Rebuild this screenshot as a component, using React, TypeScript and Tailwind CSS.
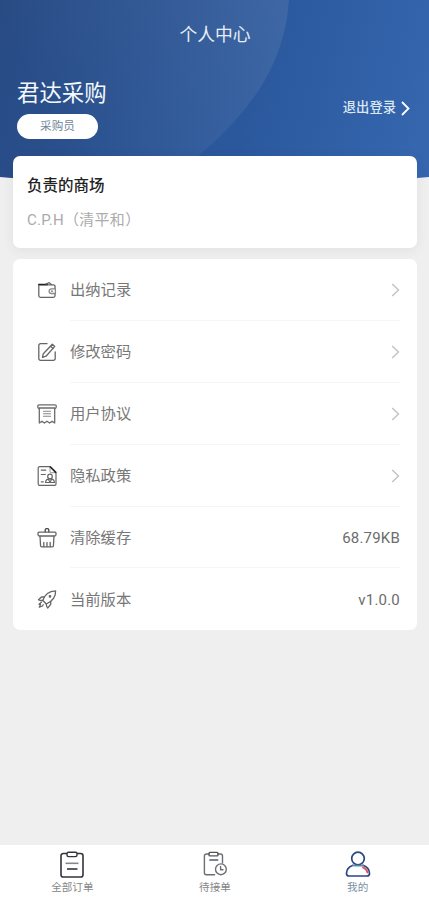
import type { ReactNode } from "react";

type MenuItem = {
  label: string;
  icon: ReactNode;
  value?: string;
};

type TabItem = {
  label: string;
  icon: ReactNode;
  active?: boolean;
};

const iconProps = {
  width: 22,
  height: 22,
  viewBox: "0 0 22 22",
  fill: "none",
  stroke: "#666",
  strokeWidth: 1.3,
  strokeLinecap: "round",
  strokeLinejoin: "round",
} as const;

const WalletIcon = () => (
  <svg {...iconProps}>
    <path d="M2.800 5.500V16.800a1.500 1.500 0 0 0 1.500 1.500h13.200a1.500 1.500 0 0 0 1.500-1.500v-2M19 9.500V7.300a1.500 1.500 0 0 0-1.500-1.500H4" />
    <path d="M3 5.500h8" stroke="#222" strokeWidth="1.700" />
    <path d="M9.800 5l3.400-1.300 2.200 1.800" />
    <path d="M19.400 9.900h-4a2.300 2.300 0 0 0 0 4.600h4z" stroke="#888" />
    <path d="M15.500 12.200h.8" />
  </svg>
);

const EditIcon = () => (
  <svg {...iconProps}>
    <path d="M11 2.700H4.500A1.700 1.700 0 0 0 2.800 4.400v13.200a1.700 1.700 0 0 0 1.700 1.700h13a1.700 1.700 0 0 0 1.700-1.700V11" />
    <path d="M16.300 3.200l2.500 2.200-8.800 9.800-3.600 1.100.9-3.600z" />
    <path d="M14.500 5.300l2.500 2.200" />
  </svg>
);

const AgreementIcon = () => (
  <svg {...iconProps} stroke="#6c6c6c">
    <path d="M3.300 5.500A1.500 1.500 0 0 1 1.800 4V3a1.200 1.200 0 0 1 1.200-1.200h16A1.200 1.200 0 0 1 20.200 3v1a1.500 1.500 0 0 1-1.500 1.500" />
    <path d="M3.300 5V20l2.600-1.800 2.500 1.800 2.600-1.800 2.600 1.800 2.500-1.800 2.600 1.800V5zM3.300 5h15.400" />
    <path d="M7.500 8.200h7M7.500 10.700h7M7.500 13.200h7" strokeWidth="1.100" stroke="#888" />
  </svg>
);

const PrivacyIcon = () => (
  <svg {...iconProps} strokeWidth={1.2}>
    <path d="M20 8.500V19a1.300 1.300 0 0 1-1.300 1.300H3.500A1.300 1.300 0 0 1 2.200 19V3a1.300 1.300 0 0 1 1.300-1.300H14" />
    <path d="M14 1.700v4.800a1.200 1.200 0 0 0 1.200 1.200h4.600" strokeWidth=".7" />
    <path d="M14.500 2l5.300 5.300" stroke="#222" strokeWidth="1.700" />
    <path d="M5.300 5.200h4.500M5.300 9.500h4M5.300 16.800h2" />
    <circle cx="14" cy="11.500" r="2.300" />
    <path d="M9.500 17.500c.1-2.300 1.500-3.700 4.500-3.700s4.400 1.400 4.500 3.700zM12.300 14.200l1.700 3 1.700-3" />
  </svg>
);

const CleanIcon = () => (
  <svg {...iconProps}>
    <path d="M9.200 5V3a1.300 1.300 0 0 1 1.300-1.300h1a1.300 1.300 0 0 1 1.300 1.300v2" stroke="#444" />
    <path d="M3 5.200h16a1 1 0 0 1 1 1v1.300a1.500 1.500 0 0 1-1.500 1.500h-15A1.500 1.500 0 0 1 2 7.500V6.200a1 1 0 0 1 1-1z" />
    <path d="M4 9.200l.6 9.800a1 1 0 0 0 1 .9h10.800a1 1 0 0 0 1-.9l.6-9.800" />
    <path d="M7.800 19.500v-4M11 19.500v-4M14.200 19.500v-4" />
  </svg>
);

const RocketIcon = () => (
  <svg {...iconProps}>
    <path d="M6.800 12.500C8.500 7 12.700 3 19.600 2.800 19.900 9.500 15.500 13.700 10.300 16z" />
    <path d="M8.200 9H5.500L2.500 11.800l2 .7h2.300M14.700 13.700v2.700L11.700 20l-1-1.500-.4-2.500" />
    <path d="M5.300 14.200L3 16.200l1.500.3-1.200 2.700 3.200-1.200.7-1.300" />
    <circle cx="14" cy="8.400" r=".7" fill="#666" />
  </svg>
);

const ChevronRight = () => (
  <svg width="9" height="14" viewBox="0 0 9 14" fill="none" stroke="#c0c0c0" strokeWidth="1.300">
    <path d="M1.200 1l6.300 6-6.300 6" />
  </svg>
);

const OrdersIcon = () => (
  <svg width="26" height="28" viewBox="0 0 26 28" fill="none" stroke="#33353b" strokeWidth="1.600" strokeLinejoin="round">
    <path d="M8 2.500H4.300A2.300 2.300 0 0 0 2 4.800v18.900A2.300 2.300 0 0 0 4.300 26h17.400a2.300 2.300 0 0 0 2.300-2.300V4.800a2.300 2.300 0 0 0-2.300-2.300H18" />
    <rect x="8" y="1.300" width="10" height="4.300" rx="1.500" strokeWidth="1.400" />
    <path d="M6.500 12.300h13" stroke="#888" />
    <path d="M8 18h10.500" />
  </svg>
);

const PendingIcon = () => (
  <svg width="26" height="28" viewBox="0 0 26 28" fill="none" stroke="#6d6e73" strokeWidth="1.400" strokeLinejoin="round" strokeLinecap="round">
    <path d="M7 3H4.400A2 2 0 0 0 2.400 5v16.700a2 2 0 0 0 2 2h8.200M20.500 12V5a2 2 0 0 0-2-2H16" />
    <rect x="7" y="1.400" width="9" height="3.500" rx="1" stroke="#555" />
    <path d="M7.800 9h8" stroke="#4d5c80" />
    <circle cx="18.900" cy="18.300" r="5.400" />
    <path d="M18.600 15.500v3.200h2.400" />
  </svg>
);

const MineIcon = () => (
  <svg width="26" height="28" viewBox="0 0 26 28" fill="none" stroke="#2b4680" strokeWidth="1.700" strokeLinejoin="round" strokeLinecap="round">
    <circle cx="13" cy="7.500" r="6.300" />
    <path d="M8 14.300C4 15.700 1.500 18.700 1.500 22.500a2.500 2.500 0 0 0 2.500 2.500h18a2.500 2.500 0 0 0 2.500-2.500c0-3.800-2.500-6.800-6.500-8.200" />
    <path d="M8 14.300c3 .4 7 .4 10 0" stroke="#5a8aa3" />
    <path d="M18 16.300c2.500 1 4 2.700 4.500 5.200" stroke="#d8576b" strokeWidth="1.900" />
  </svg>
);

const menu: MenuItem[] = [
  { label: "出纳记录", icon: <WalletIcon /> },
  { label: "修改密码", icon: <EditIcon /> },
  { label: "用户协议", icon: <AgreementIcon /> },
  { label: "隐私政策", icon: <PrivacyIcon /> },
  { label: "清除缓存", icon: <CleanIcon />, value: "68.79KB" },
  { label: "当前版本", icon: <RocketIcon />, value: "v1.0.0" },
];

const tabs: TabItem[] = [
  { label: "全部订单", icon: <OrdersIcon /> },
  { label: "待接单", icon: <PendingIcon /> },
  { label: "我的", icon: <MineIcon />, active: true },
];

// Blue backdrop with the large translucent disc and the curved lower edge
const HeaderBackground = () => (
  <svg className="absolute inset-x-0 top-0 h-[186px] w-full" viewBox="0 0 429 186" preserveAspectRatio="none">
    <defs>
      <linearGradient id="sky" x1="0" y1="0" x2="429" y2="100" gradientUnits="userSpaceOnUse">
        <stop offset="0" stopColor="#284b84" />
        <stop offset=".6" stopColor="#2b589d" />
        <stop offset="1" stopColor="#3566ae" />
      </linearGradient>
      <linearGradient id="disc" x1="40" y1="110" x2="280" y2="10" gradientUnits="userSpaceOnUse">
        <stop offset="0" stopColor="#b4bec8" stopOpacity="0" />
        <stop offset="1" stopColor="#b4bec8" stopOpacity=".13" />
      </linearGradient>
      <clipPath id="curve">
        <path d="M0 0h429v177Q214 197 0 177z" />
      </clipPath>
    </defs>
    <g clipPath="url(#curve)">
      <path d="M0 0h429v186H0z" fill="url(#sky)" />
      <path d="M0 0H289Q287 32 274 62Q254 108 203 152L160 186H0z" fill="url(#disc)" />
    </g>
  </svg>
);

export default function App() {
  return (
    <div className="flex h-[900px] w-full flex-col bg-[#efefef] font-['Roboto','Noto_Sans_CJK_SC',sans-serif]">
      <div className="relative flex-1">
        <HeaderBackground />

        <div className="relative pr-[12px] pl-[13px]">
          <h1 className="pt-[22px] text-center text-[17.800px] leading-[26px] text-[#e8eef6]">个人中心</h1>

          <div className="mt-[29px] flex h-[79px] justify-between pl-1">
            <div>
              <h2 className="text-[22.400px] leading-[32px] text-[#f4f8fc]">君达采购</h2>
              <div className="mt-[5px] flex h-[25px] w-[81px] items-center justify-center rounded-full bg-white pt-px text-[11.600px] text-[#71869b]">
                采购员
              </div>
            </div>
            <button className="mt-[20px] flex h-[22px] items-center gap-[5px] pr-[7px] text-[13.300px] font-medium text-[#dce7f4]">
              退出登录
              <svg width="9" height="15" viewBox="0 0 9 15" fill="none" stroke="#fff" strokeWidth="1.800">
                <path d="M1 1l6.500 6.500L1 14" />
              </svg>
            </button>
          </div>

          <section className="h-[92px] rounded-[7px] bg-white px-[14px] pt-[18px] shadow-[0_2px_12px_rgba(60,70,90,0.08)]">
            <h3 className="text-[15.500px] leading-[24px] font-medium text-[#222]">负责的商场</h3>
            <p className="mt-[10px] text-[15px] leading-[24px] tracking-[0.300px] text-[#ababab]">C.P.H（清平和）</p>
          </section>

          <section className="mt-[11px] rounded-[7px] bg-white pr-[17px] pl-[23px]">
            {menu.map((item, i) => (
              <div key={item.label} className="flex h-[61.900px] items-center gap-[12px]">
                {item.icon}
                <div
                  className={
                    i < menu.length - 1
                      ? "flex h-full flex-1 items-center justify-between border-b border-[#f5f5f5] pt-[2px]"
                      : "flex h-full flex-1 items-center justify-between pt-[2px]"
                  }
                >
                  <span className="pt-px text-[15.300px] text-[#777]">{item.label}</span>
                  {item.value ? (
                    <span className="text-[15px] tracking-[0.200px] text-[#6c6c6c]">{item.value}</span>
                  ) : (
                    <ChevronRight />
                  )}
                </div>
              </div>
            ))}
          </section>
        </div>
      </div>

      <nav className="grid h-[55px] grid-cols-3 bg-white pl-px">
        {tabs.map((tab) => (
          <button key={tab.label} className="flex flex-col items-center pt-[6px]">
            {tab.icon}
            <span
              className={
                tab.active
                  ? "mt-[2px] text-[10.600px] leading-[14px] text-[#7790a5]"
                  : "mt-[2px] text-[10.600px] leading-[14px] text-[#858585]"
              }
            >
              {tab.label}
            </span>
          </button>
        ))}
      </nav>
    </div>
  );
}
